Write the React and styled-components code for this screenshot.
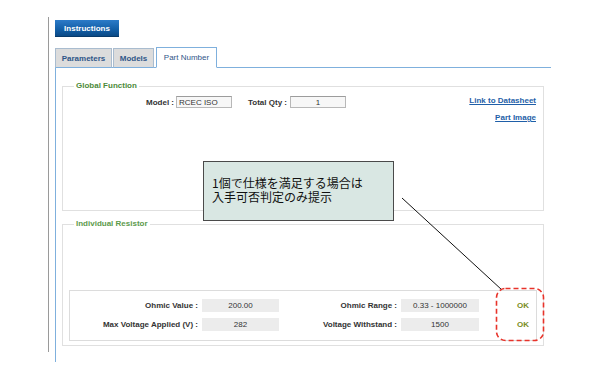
import React from 'react';
import styled, { createGlobalStyle } from 'styled-components';

const GlobalStyle = createGlobalStyle`
    html, body {
        margin: 0;
        padding: 0;
        background: #ffffff;
    }
    body {
        font-family: "Liberation Sans", Arial, sans-serif;
        font-size: 8px;
        color: #333;
    }
`;

const Screen = styled.div`
    position: relative;
    width: 600px;
    height: 370px;
    overflow: hidden;
`;

const Page = styled.div`
    margin: 17px 0 0 48px;
    border-left: 1px solid #9a9a9a;
    padding: 3px 0 0 6px;
    width: 496px;
    height: 335px;
    box-sizing: border-box;
`;

const InstructionsButton = styled.div`
    width: 64px;
    height: 17px;
    box-sizing: border-box;
    display: flex;
    align-items: center;
    justify-content: center;
    background: linear-gradient(#2c7bc8, #125ea6 60%, #0b4a86);
    border-bottom: 1px solid #083a6a;
    color: #fff;
    font-weight: bold;
    font-size: 8px;
`;

const TabBar = styled.div`
    margin-top: 10px;
    display: flex;
    align-items: flex-end;
    gap: 1px;
    position: relative;
    z-index: 1;
`;

const Tab = styled.div`
    width: ${p => p.$w}px;
    height: ${p => (p.$active ? 21 : 20)}px;
    box-sizing: border-box;
    display: flex;
    align-items: center;
    justify-content: center;
    border: 1px solid ${p => (p.$active ? '#7fb0dd' : '#a9bccf')};
    border-bottom-color: ${p => (p.$active ? '#ffffff' : '#7fb0dd')};
    background: ${p => (p.$active ? '#ffffff' : '#dcdcdc')};
    color: #2f5688;
    font-weight: ${p => (p.$active ? 'normal' : 'bold')};
    font-size: 8px;
    margin-left: ${p => (p.$active ? 1 : 0)}px;
`;

const Panel = styled.div`
    margin-top: -1px;
    border-top: 1px solid #7fb0dd;
    border-left: 1px solid #7fb0dd;
    height: 295px;
    box-sizing: border-box;
    padding: 13px 0 0 6px;
    width: 496px;
`;

const Fieldset = styled.fieldset`
    margin: 0 0 ${p => p.$gap || 0}px 0;
    padding: 0 6px ${p => p.$bottom || 0}px 6px;
    width: 482px;
    box-sizing: border-box;
    border: 1px solid #e0e0e0;
    min-inline-size: auto;
`;

const Legend = styled.legend`
    margin-left: 5px;
    padding: 0 2px;
    font-size: 8px;
    line-height: 10px;
    font-weight: bold;
    color: ${p => p.$tone || '#4c8a3a'};
`;

const GlobalBody = styled.div`
    height: 119px;
    box-sizing: border-box;
    padding: 5px 1px 0 77px;
    display: flex;
    justify-content: space-between;
    align-items: flex-start;
`;

const FieldGroup = styled.div`
    display: flex;
    align-items: center;
    height: 12px;
`;

const Label = styled.span`
    font-weight: bold;
    color: #333;
    font-size: 8px;
    margin: 0 ${p => p.$gap || 2}px 0 ${p => p.$lead || 0}px;
    white-space: nowrap;
`;

const Input = styled.div`
    width: ${p => p.$w}px;
    height: 12px;
    box-sizing: border-box;
    border: 1px solid #b8b8b8;
    border-top-color: #9c9c9c;
    background: #f7f7f7;
    padding: 0 2px;
    display: flex;
    align-items: center;
    justify-content: ${p => (p.$center ? 'center' : 'flex-start')};
    color: #333;
    font-size: 8px;
`;

const LinkList = styled.div`
    display: flex;
    flex-direction: column;
    align-items: flex-end;
    gap: 7px;
`;

const Link = styled.a`
    color: #1f5fa8;
    font-weight: bold;
    font-size: 8px;
    line-height: 10px;
    text-decoration: underline;
`;

const ResultBox = styled.div`
    margin-top: 61px;
    border: 1px solid #dcdcdc;
    padding: 8px 0 9px 0;
    display: grid;
    grid-template-columns: 128px 77px 114px 78px 1fr;
    column-gap: 4px;
    row-gap: 6px;
    align-items: center;
`;

const RowLabel = styled.span`
    justify-self: end;
    font-weight: bold;
    color: #333;
    font-size: 8px;
    white-space: nowrap;
`;

const Value = styled.div`
    height: 13px;
    background: #ececec;
    display: flex;
    align-items: center;
    justify-content: center;
    color: #333;
    font-size: 8px;
`;

const Status = styled.span`
    padding-left: 34px;
    font-weight: bold;
    color: #7a8e24;
    font-size: 8px;
`;

const Callout = styled.div`
    position: absolute;
    left: 203px;
    top: 161px;
    width: 191px;
    height: 60px;
    box-sizing: border-box;
    border: 1px solid #4a4a4a;
    background: #d9e7e3;
    padding: 14px 0 0 8px;
    font-family: "Noto Sans CJK JP", "Liberation Sans", sans-serif;
    font-size: 12px;
    color: #111;
`;

const CalloutLine = styled.div`
    line-height: 14px;
    white-space: nowrap;
`;

const Overlay = styled.svg`
    position: absolute;
    left: 0;
    top: 0;
    pointer-events: none;
`;

const rows = [
    { label: 'Ohmic Value :', value: '200.00', label2: 'Ohmic Range :', value2: '0.33 - 1000000' },
    { label: 'Max Voltage Applied (V) :', value: '282', label2: 'Voltage Withstand :', value2: '1500' }
];

const App = () => (
    <Screen>
        <GlobalStyle />
        <Page>
            <InstructionsButton>Instructions</InstructionsButton>
            <TabBar>
                <Tab $w={57}>Parameters</Tab>
                <Tab $w={41}>Models</Tab>
                <Tab $w={61} $active>Part Number</Tab>
            </TabBar>
            <Panel>
                <Fieldset $gap={8}>
                    <Legend>Global Function</Legend>
                    <GlobalBody>
                        <FieldGroup>
                            <Label>Model :</Label>
                            <Input $w={56}>RCEC ISO</Input>
                            <Label $lead={16} $gap={3}>Total Qty :</Label>
                            <Input $w={56} $center>1</Input>
                        </FieldGroup>
                        <LinkList>
                            <Link>Link to Datasheet</Link>
                            <Link>Part Image</Link>
                        </LinkList>
                    </GlobalBody>
                </Fieldset>
                <Fieldset $bottom={4}>
                    <Legend $tone="#5c9a4c">Individual Resistor</Legend>
                    <ResultBox>
                        {rows.map(r => (
                            <React.Fragment key={r.label}>
                                <RowLabel>{r.label}</RowLabel>
                                <Value>{r.value}</Value>
                                <RowLabel>{r.label2}</RowLabel>
                                <Value>{r.value2}</Value>
                                <Status>OK</Status>
                            </React.Fragment>
                        ))}
                    </ResultBox>
                </Fieldset>
            </Panel>
        </Page>

        <Callout>
            <CalloutLine>1個で仕様を満足する場合は</CalloutLine>
            <CalloutLine>入手可否判定のみ提示</CalloutLine>
        </Callout>

        <Overlay width="600" height="370" viewBox="0 0 600 370">
            <line x1="402" y1="198" x2="502" y2="290" stroke="#111" strokeWidth="1" />
            <rect x="496.5" y="288.5" width="47" height="52" rx="9" fill="none"
                stroke="#e8332a" strokeWidth="1.6" strokeDasharray="5 3" />
        </Overlay>
    </Screen>
);

export default App;
